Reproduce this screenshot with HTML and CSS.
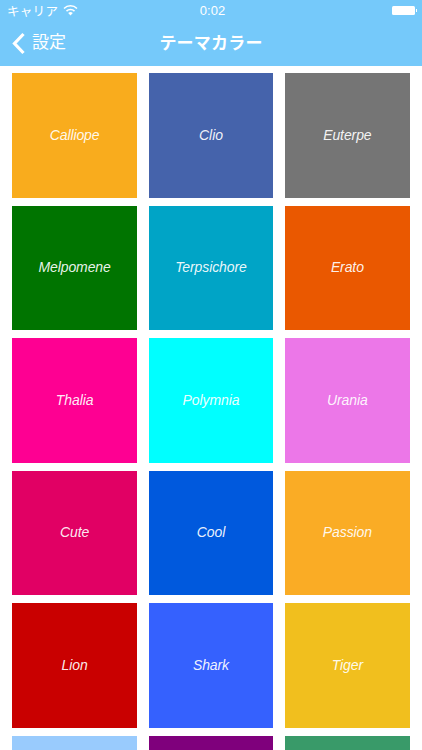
FILE: index.html
```html
<!DOCTYPE html>
<html lang="ja">
<head>
<meta charset="utf-8">
<title>テーマカラー</title>
<link rel="stylesheet" href="styles.css">
</head>
<body>
<div class="screen">
  <header class="header">
    <div class="status">
      <div class="status-left">
        <span class="carrier">キャリア</span>
        <svg class="wifi" width="15" height="11" viewBox="0 0 15 11"><path d="M7.5 10.6 5.2 8a3.3 3.3 0 0 1 4.6 0Z" fill="#fff"/><path d="M3.5 6.1a5.7 5.7 0 0 1 8 0M1 3.5a9.3 9.3 0 0 1 13 0" fill="none" stroke="#fff" stroke-width="1.5"/></svg>
      </div>
      <span class="time">0:02</span>
      <div class="status-right">
        <span class="battery"></span><span class="battery-tip"></span>
      </div>
    </div>
    <nav class="nav">
      <div class="back">
        <svg class="chevron" width="14" height="23" viewBox="0 0 14 23"><path d="M11.5 2 2.5 11.5l9 9.5" fill="none" stroke="#fff" stroke-width="3.2"/></svg>
        <span>設定</span>
      </div>
      <h1 class="title">テーマカラー</h1>
    </nav>
  </header>
  <main class="grid">
    <div class="tile calliope">Calliope</div>
    <div class="tile clio">Clio</div>
    <div class="tile euterpe">Euterpe</div>
    <div class="tile melpomene">Melpomene</div>
    <div class="tile terpsichore">Terpsichore</div>
    <div class="tile erato">Erato</div>
    <div class="tile thalia">Thalia</div>
    <div class="tile polymnia">Polymnia</div>
    <div class="tile urania">Urania</div>
    <div class="tile cute">Cute</div>
    <div class="tile cool">Cool</div>
    <div class="tile passion">Passion</div>
    <div class="tile lion">Lion</div>
    <div class="tile shark">Shark</div>
    <div class="tile tiger">Tiger</div>
    <div class="tile sky"></div>
    <div class="tile purple"></div>
    <div class="tile green"></div>
  </main>
</div>
</body>
</html>
```
FILE: styles.css
```css
* { box-sizing: border-box; }
html, body { margin: 0; padding: 0; }
body {
  width: 422px;
  height: 750px;
  overflow: hidden;
  background: #fff;
  font-family: "Liberation Sans", "Noto Sans CJK JP", sans-serif;
}
.screen { height: 750px; overflow: hidden; }
.header { height: 66px; background: #75c9fa; color: #fff; }
.status {
  height: 22px;
  display: grid;
  grid-template-columns: 1fr auto 1fr;
  align-items: center;
  padding: 0 4px 1px 7px;
  font-size: 12.5px;
}
.status-left { display: flex; align-items: center; gap: 5px; }
.carrier { letter-spacing: 0.3px; }
.wifi { display: block; }
.time { font-size: 13px; }
.status-right { display: flex; align-items: center; justify-content: flex-end; padding-right: 1px; }
.battery { width: 23px; height: 9px; background: #fff; border-radius: 1.5px; }
.battery-tip { width: 1.5px; height: 3px; background: #fff; margin-left: 1px; }
.nav {
  height: 44px;
  position: relative;
  display: flex;
  align-items: center;
  justify-content: center;
}
.back {
  position: absolute;
  left: 12px;
  top: 9px;
  display: flex;
  align-items: center;
  gap: 6px;
  font-size: 17px;
  line-height: 24px;
}
.chevron { display: block; }
.title { margin: 0; font-size: 17px; font-weight: 700; line-height: 24px; letter-spacing: 0.2px; }
.grid {
  display: grid;
  grid-template-columns: repeat(3, 124.4px);
  grid-auto-rows: 124.5px;
  column-gap: 12px;
  row-gap: 8px;
  padding: 7px 12.4px 0;
}
.tile {
  display: flex;
  align-items: center;
  justify-content: center;
  padding-bottom: 1px;
  color: rgba(255, 255, 255, 0.93);
  font-size: 14px;
  letter-spacing: -0.1px;
  font-style: italic;
}
.calliope { background: #f9ac1d; }
.clio { background: #4563ab; }
.euterpe { background: #757575; }
.melpomene { background: #007400; }
.terpsichore { background: #00a4c6; }
.erato { background: #ea5800; }
.thalia { background: #fe0092; }
.polymnia { background: #00ffff; }
.urania { background: #ec77e8; }
.cute { background: #e10064; }
.cool { background: #0059dd; }
.passion { background: #faac25; }
.lion { background: #c90000; }
.shark { background: #3561fe; }
.tiger { background: #f1bf1e; }
.sky { background: #99cbfd; }
.purple { background: #7f007c; }
.green { background: #399a69; }
```
